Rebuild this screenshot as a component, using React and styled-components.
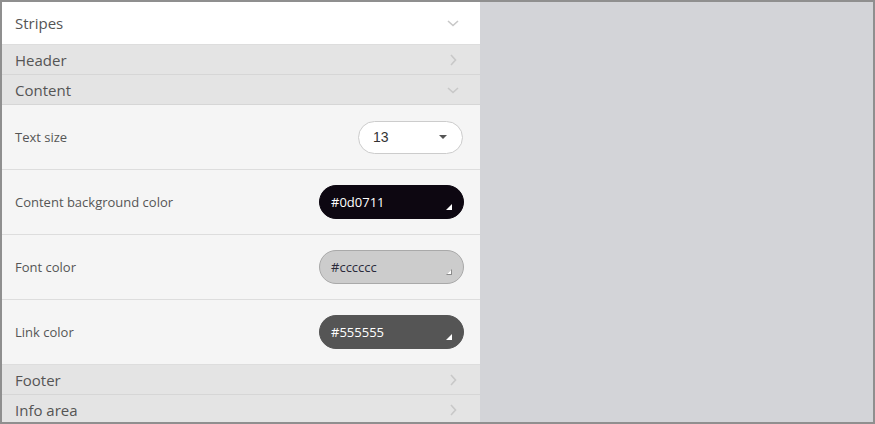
import React from "react"
import styled, { createGlobalStyle } from "styled-components"

const GlobalStyle = createGlobalStyle`
  html, body {
    margin: 0;
    padding: 0;
  }
  body {
    font-family: "Open Sans", "Noto Sans", sans-serif;
    background: #ffffff;
  }
`

const Frame = styled.div`
  width: 875px;
  height: 424px;
  box-sizing: border-box;
  border: 2px solid #8f8f8f;
  display: flex;
  overflow: hidden;
`

const Panel = styled.div`
  width: 478px;
  display: flex;
  flex-direction: column;
  background: #f5f5f5;
  overflow: hidden;
  & > * {
    flex-shrink: 0;
  }
`

const Preview = styled.div`
  flex: 1;
  background: #d3d4d8;
`

const SectionTitle = styled.div`
  height: 43px;
  box-sizing: border-box;
  background: #ffffff;
  border-bottom: 1px solid #dddddd;
  display: flex;
  align-items: center;
  justify-content: space-between;
  padding: 0 21px 0 13px;
  font-size: 15px;
  color: #555555;
`

const GroupRow = styled.div`
  height: 30px;
  box-sizing: border-box;
  background: #e4e4e4;
  border-bottom: 1px solid #d6d6d6;
  display: flex;
  align-items: center;
  justify-content: space-between;
  padding: 0 21px 0 13px;
  font-size: 15px;
  color: #555555;
`

const FieldRow = styled.div`
  height: 65px;
  box-sizing: border-box;
  border-bottom: 1px solid #dddddd;
  display: flex;
  align-items: center;
  justify-content: space-between;
  padding: 0 16px 0 13px;
  font-size: 13px;
  color: #555555;
`

const SelectBox = styled.div`
  width: 105px;
  height: 33px;
  box-sizing: border-box;
  border: 1px solid #cccccc;
  border-radius: 17px;
  background: #ffffff;
  display: flex;
  align-items: center;
  justify-content: space-between;
  padding: 0 15px 0 14px;
  font-family: "Liberation Sans", Arial, sans-serif;
  font-size: 14px;
  color: #333333;
  margin-right: 1px;
`

const Caret = styled.span`
  width: 0;
  height: 0;
  border-left: 4px solid transparent;
  border-right: 4px solid transparent;
  border-top: 4px solid #555555;
`

const ColorInput = styled.div`
  position: relative;
  width: 145px;
  height: 34px;
  box-sizing: border-box;
  border-radius: 17px;
  background: ${p => p.$color};
  border: 1px solid ${p => (p.$light ? "#a9a9a9" : p.$color)};
  color: ${p => (p.$light ? "#2a2a3a" : "#ffffff")};
  display: flex;
  align-items: center;
  padding-left: 11px;
  font-size: 13px;
`

const Corner = styled.span`
  position: absolute;
  right: 11px;
  bottom: 8px;
  width: 0;
  height: 0;
  border-left: 6px solid transparent;
  border-bottom: 6px solid ${p => (p.$light ? "#8a8a8a" : "#ffffff")};
`

const CornerInner = styled.span`
  position: absolute;
  right: 12px;
  bottom: 9px;
  width: 0;
  height: 0;
  border-left: 4px solid transparent;
  border-bottom: 4px solid #ffffff;
`

const Chevron = ({ dir }) => (
  <svg width="12" height="12" viewBox="0 0 12 12">
    {dir === "down" ? (
      <path d="M1 4 L6 8.5 L11 4" fill="none" stroke="#c8c8c8" strokeWidth="1.6" />
    ) : (
      <path d="M4 1 L8.5 6 L4 11" fill="none" stroke="#c8c8c8" strokeWidth="1.6" />
    )}
  </svg>
)

const colors = [
  { label: "Content background color", value: "#0d0711" },
  { label: "Font color", value: "#cccccc", light: true },
  { label: "Link color", value: "#555555" },
]

export default function App() {
  return (
    <>
      <GlobalStyle />
      <Frame>
        <Panel>
          <SectionTitle>
            Stripes
            <Chevron dir="down" />
          </SectionTitle>
          <GroupRow>
            Header
            <Chevron dir="right" />
          </GroupRow>
          <GroupRow>
            Content
            <Chevron dir="down" />
          </GroupRow>
          <FieldRow>
            Text size
            <SelectBox>
              13
              <Caret />
            </SelectBox>
          </FieldRow>
          {colors.map(c => (
            <FieldRow key={c.label}>
              {c.label}
              <ColorInput $color={c.value} $light={c.light}>
                {c.value}
                <Corner $light={c.light} />
                {c.light && <CornerInner />}
              </ColorInput>
            </FieldRow>
          ))}
          <GroupRow>
            Footer
            <Chevron dir="right" />
          </GroupRow>
          <GroupRow>
            Info area
            <Chevron dir="right" />
          </GroupRow>
        </Panel>
        <Preview />
      </Frame>
    </>
  )
}
